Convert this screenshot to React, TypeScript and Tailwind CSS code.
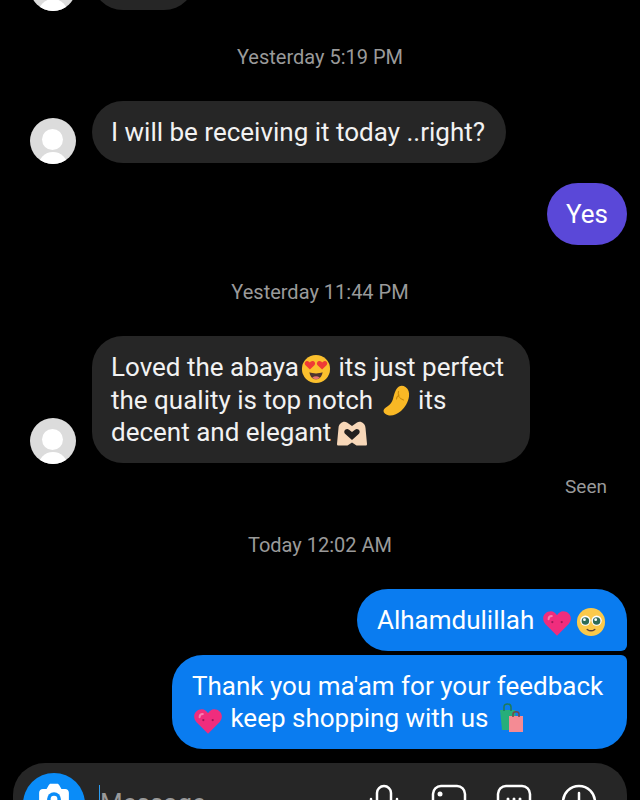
import React from 'react';

const font = { fontFamily: 'Roboto, sans-serif' };

function Avatar() {
  return (
    <div className="relative w-[46px] h-[46px] shrink-0 mb-[-1px] rounded-full bg-[#dcdcdc] overflow-hidden">
      <div className="absolute left-[12px] top-[11px] w-[21px] h-[21px] rounded-full bg-white" />
      <div className="absolute left-[8px] top-[34px] w-[30px] h-5 rounded-t-full bg-white" />
    </div>
  );
}

function Stamp({ children, className }: { children: React.ReactNode; className: string }) {
  return <div className={`text-center text-[20px] leading-6 text-[#9a9a9a] ${className}`}>{children}</div>;
}

function HeartEyes() {
  return (
    <svg viewBox="0 0 32 32" className="inline-block w-[30px] h-[30px] -my-1 ml-[2px] mr-px align-[-4px]">
      <circle cx="16" cy="16" r="15" fill="#fbc02d" />
      <path d="M9 19.5c4 1.6 10 1.6 14 0-.6 5-3.6 7.5-7 7.5s-6.4-2.5-7-7.5z" fill="#4e342e" />
      <path d="M12 25c2.5-1.800 5.500-1.800 8 0-2.400 2.600-5.600 2.600-8 0z" fill="#e57373" />
      <path d="M9.500 16.500 4.800 12c-2.300-2.500.9-6 3.700-3.800l1 .8.900-.9c2.800-2.300 6.200 1.100 3.900 3.800z" fill="#ef3b36" />
      <path d="M22.500 16.500 27.200 12c2.300-2.500-.9-6-3.700-3.800l-1 .8-.9-.9c-2.800-2.300-6.200 1.100-3.900 3.800z" fill="#ef3b36" />
    </svg>
  );
}

function Pinch() {
  return (
    <svg viewBox="0 0 32 32" className="inline-block w-8 h-8 -my-1 align-[-4px]">
      <path d="M19 1.500c2-1 4.500-.8 6.500.5 3 2 4 5.500 3.500 9.500-.7 5.500-4 11-8 14.500-3.500 3-8 5-12 4.500C6 29.800 3.500 28 3.500 26c0-1.800 1.800-3.200 3.800-4.500 3-2 4.700-4.300 5.700-7.500C14 10 15.500 3.500 19 1.500z" fill="#f9b825" />
      <path d="M18.500 6.500c-1 3.500.8 7 5 8.500M19 10c-1.500 1.200-2.500 2.500-2.500 4" fill="none" stroke="#c98a0a" strokeWidth="1.100" strokeLinecap="round" />
    </svg>
  );
}

function HeartHands() {
  return (
    <svg viewBox="0 0 32 26" className="inline-block w-8 h-[26px] -my-1 -ml-[2px] align-[-1px]">
      <path d="M1 24 2.500 8C3 3 7.500.5 11 2.500l5 3.500 5-3.500C24.500.5 29 3 29.500 8L31 24c0 1-.5 1.500-1.500 1.500h-9L16 22.500l-4.500 3h-9C1.500 25.500 1 25 1 24z" fill="#f7d7b8" />
      <path d="M16 20 9.300 14c-2.800-2.700.8-6.500 3.700-4.300l3 2.300 3-2.300c2.900-2.200 6.500 1.600 3.700 4.300z" fill="#22201f" />
    </svg>
  );
}

function PinkHeart() {
  return (
    <svg viewBox="0 0 32 32" className="inline-block w-[30px] h-[30px] -my-1 ml-px mr-px align-[-5px]">
      <path d="M16 29.500 3.500 17C-1.500 11 2.500 3.500 9.500 3.500c2.800 0 5 1.800 6.500 4.300 1.500-2.500 3.700-4.300 6.500-4.300 7 0 11 7.500 6 13.500z" fill="#f02d7d" />
      <path d="M7 12c0-2 1.500-3.500 3.500-3.500" fill="none" stroke="#f77fb0" strokeWidth="2" strokeLinecap="round" />
      <circle cx="11" cy="15" r="1.200" fill="#a01858" />
      <circle cx="21" cy="15" r="1.200" fill="#a01858" />
    </svg>
  );
}

function PleadingFace() {
  return (
    <svg viewBox="0 0 32 32" className="inline-block w-[30px] h-[30px] -my-1 -ml-[3px] align-[-4px]">
      <circle cx="16" cy="16" r="15" fill="#fbc94a" />
      <circle cx="10" cy="14.500" r="5.500" fill="#fff" />
      <circle cx="22" cy="14.500" r="5.500" fill="#fff" />
      <circle cx="10" cy="15" r="4" fill="#2e6b57" />
      <circle cx="22" cy="15" r="4" fill="#2e6b57" />
      <circle cx="9" cy="13.500" r="1.500" fill="#fff" />
      <circle cx="21" cy="13.500" r="1.500" fill="#fff" />
      <path d="M12 24c2.500 1.800 5.500 1.800 8 0" fill="none" stroke="#5d4037" strokeWidth="1.600" strokeLinecap="round" />
    </svg>
  );
}

function Bags() {
  return (
    <svg viewBox="0 0 32 32" className="inline-block w-8 h-8 -my-1 align-[-3px]">
      <path d="M5 8h15l2 20H7z" fill="#27ae7a" />
      <path d="M9 9V5c0-4 7-4 7 0v4" fill="none" stroke="#1f7a58" strokeWidth="1.500" />
      <path d="M14 14h14v16H14z" fill="#f48b94" />
      <path d="M18 15v-3c0-3 6-3 6 0v3" fill="none" stroke="#6f4b4b" strokeWidth="1.500" />
    </svg>
  );
}

function Composer() {
  return (
    <div className="mt-[14px] ml-[13px] w-[614px] h-[80px] shrink-0 rounded-[32px] bg-[#262626] flex items-start pl-[10px] pr-[30px] pt-[10px]">
      <div className="w-[62px] h-[62px] shrink-0 rounded-full bg-[#0a8cf8] flex items-start justify-center pt-[8px]">
        <svg viewBox="0 0 32 32" className="w-[34px] h-[34px]">
          <path d="M2 11c0-2 1.500-3.500 3.500-3.500H9L11 4c.5-1 1-1.500 2-1.500h6c1 0 1.500.5 2 1.500l2 3.500h3.500C28.500 7.500 30 9 30 11v14c0 2-1.500 3.500-3.500 3.500h-21C3.500 28.500 2 27 2 25z" fill="#fff" />
          <circle cx="16" cy="17" r="6.500" fill="#0a8cf8" />
          <circle cx="16" cy="17" r="3.200" fill="#fff" />
        </svg>
      </div>
      <div className="ml-[14px] mt-[12px] w-px h-8 bg-[#2a9df4] -mr-px" />
      <div className="ml-[1px] mt-[14px] text-[26px] leading-8 text-[#9a9a9a]">Message</div>
      <div className="ml-auto flex items-start gap-[29px] pt-[11px]">
        <svg viewBox="0 0 36 36" className="w-9 h-9" fill="none" stroke="#fff" strokeWidth="2.500" strokeLinecap="round">
          <rect x="11" y="2" width="14" height="26" rx="7" />
          <path d="M5 15c0 9 5 17 13 17s13-8 13-17" />
        </svg>
        <svg viewBox="0 0 36 36" className="w-9 h-9" fill="none" stroke="#fff" strokeWidth="2.500">
          <rect x="2" y="2" width="32" height="32" rx="8" />
          <circle cx="9" cy="10" r="2.500" fill="#fff" stroke="none" />
        </svg>
        <svg viewBox="0 0 36 36" className="w-9 h-9" fill="none" stroke="#fff" strokeWidth="2.500">
          <rect x="2" y="2" width="32" height="32" rx="8" />
          <circle cx="12" cy="15" r="1.500" fill="#fff" stroke="none" />
          <circle cx="18" cy="15" r="1.500" fill="#fff" stroke="none" />
          <circle cx="24" cy="15" r="1.500" fill="#fff" stroke="none" />
        </svg>
        <svg viewBox="0 0 36 36" className="w-9 h-9" fill="none" stroke="#fff" strokeWidth="2.500" strokeLinecap="round">
          <circle cx="18" cy="18" r="16" />
          <path d="M18 9v18M9 18h18" />
        </svg>
      </div>
    </div>
  );
}

export default function App() {
  return (
    <div className="h-[800px] w-[640px] overflow-hidden bg-black flex flex-col text-[26px] leading-8 text-[#f2f2f2]" style={font}>
      <div className="mt-[-52px] ml-[30px] flex items-end gap-[16px]">
        <Avatar />
        <div className="w-[103px] h-[62px] rounded-[31px] bg-[#262626]" />
      </div>

      <Stamp className="mt-[35px]">Yesterday 5:19 PM</Stamp>

      <div className="mt-[32px] ml-[30px] flex items-end gap-[16px]">
        <Avatar />
        <div className="rounded-[31px] bg-[#262626] pl-[19px] pr-[21px] py-[15px]">I will be receiving it today ..right?</div>
      </div>

      <div className="mt-[20px] mr-[13px] self-end rounded-[31px] bg-[#5a48d8] px-[19px] py-[15px] text-white">Yes</div>

      <Stamp className="mt-[35px]">Yesterday 11:44 PM</Stamp>

      <div className="mt-[32px] ml-[30px] flex items-end gap-[16px]">
        <Avatar />
        <div className="w-[438px] rounded-[31px] bg-[#262626] pl-[19px] pr-[19px] pt-[15px] pb-[14px] leading-[32.5px]">
          Loved the abaya<HeartEyes /> its just perfect the quality is top notch <Pinch /> its decent and elegant <HeartHands />
        </div>
      </div>

      <div className="mt-[12px] mr-[33px] self-end text-[19px] leading-6 text-[#9a9a9a]">Seen</div>

      <Stamp className="mt-[34px]">Today 12:02 AM</Stamp>

      <div className="mt-[32px] mr-[13px] self-end w-[270px] rounded-l-[31px] rounded-tr-[31px] rounded-br-[6px] bg-[#0a7cf0] px-[20px] py-[15px] text-white whitespace-nowrap">
        Alhamdulillah <PinkHeart /> <PleadingFace />
      </div>
      <div className="mt-[4px] mr-[13px] self-end w-[455px] rounded-l-[31px] rounded-br-[31px] rounded-tr-[6px] bg-[#0a7cf0] pl-[20px] pr-[20px] pt-[15px] pb-[14px] text-white leading-[32.5px]">
        Thank you ma'am for your feedback <PinkHeart /> keep shopping with us <Bags />
      </div>

      <Composer />
    </div>
  );
}
